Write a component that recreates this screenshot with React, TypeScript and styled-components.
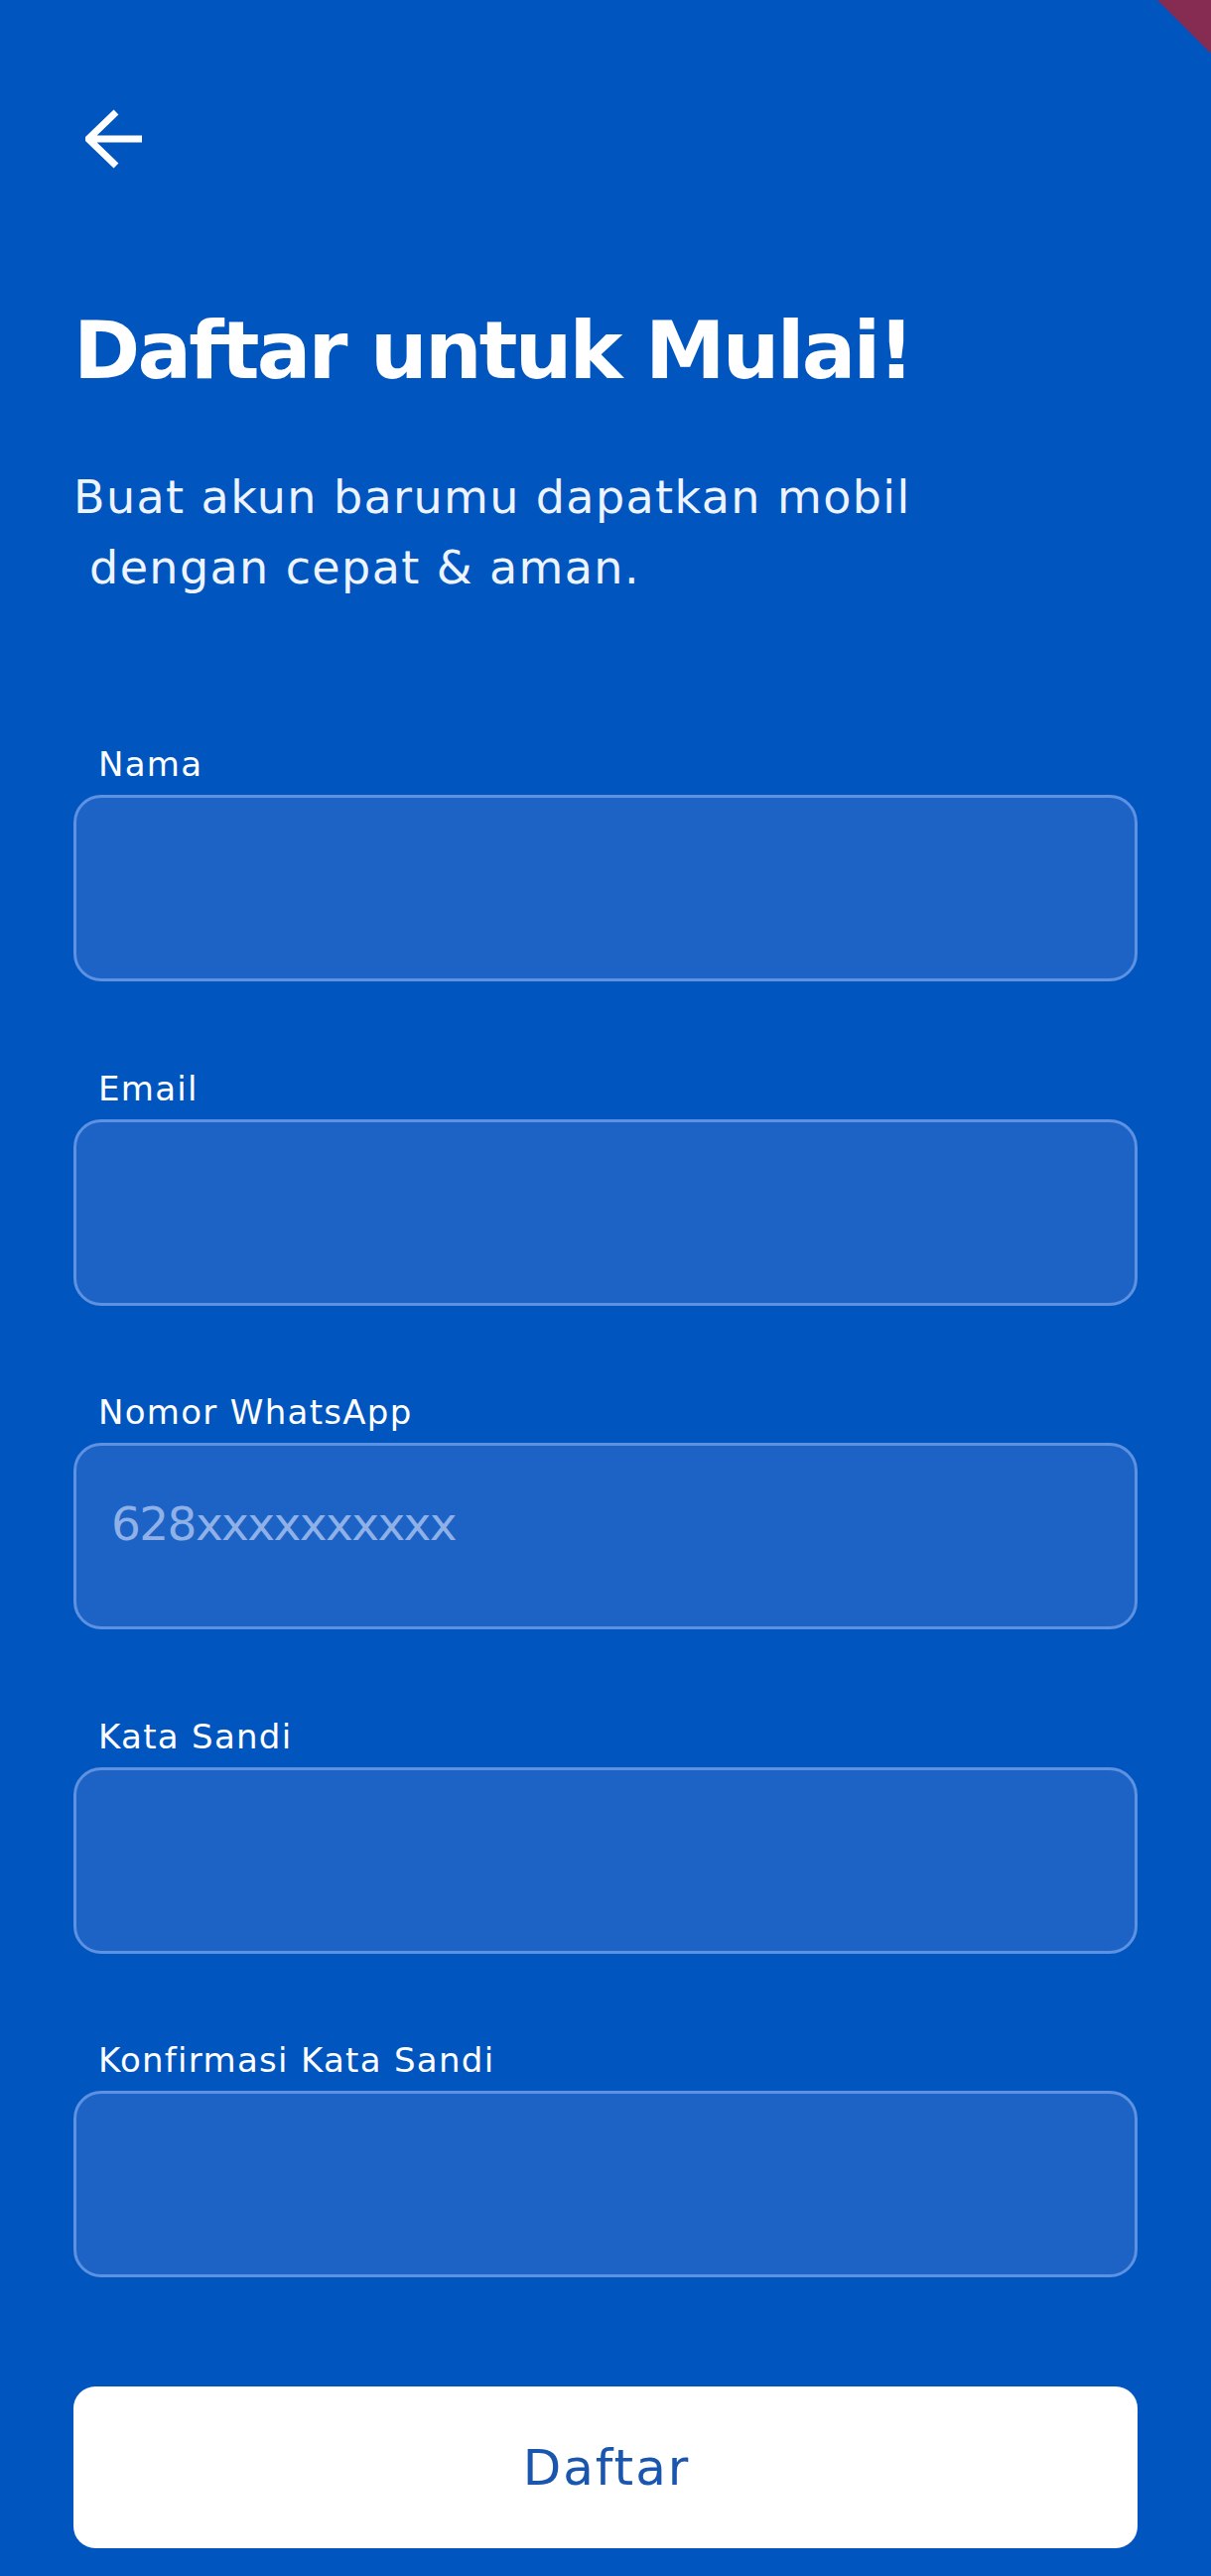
import React from "react";
import styled, { createGlobalStyle } from "styled-components";

const GlobalStyle = createGlobalStyle`
  html, body {
    margin: 0;
    padding: 0;
    background: #0055bf;
  }
  * { box-sizing: border-box; }
`;

const Page = styled.div`
  position: relative;
  overflow: hidden;
  min-height: 2596px;
  background: #0055bf;
  padding: 0 74px;
  display: flex;
  flex-direction: column;
  font-family: "DejaVu Sans", "Liberation Sans", sans-serif;
  color: #ffffff;
`;

const DebugCorner = styled.div`
  position: absolute;
  top: 0;
  right: 0;
  width: 54px;
  height: 54px;
  background: #862b52;
  clip-path: polygon(0 0, 100% 0, 100% 100%);
`;

const BackButton = styled.button`
  margin: 110px 0 0 12px;
  padding: 0;
  width: 60px;
  height: 60px;
  border: none;
  background: transparent;
  cursor: pointer;
  display: block;
  svg { display: block; }
`;

const Title = styled.h1`
  margin: 135px 0 0 0;
  font-size: 81px;
  line-height: 96px;
  font-weight: 700;
  letter-spacing: -2.8px;
  color: #ffffff;
`;

const Subtitle = styled.p`
  margin: 65px 0 0 0;
  font-size: 46px;
  line-height: 71px;
  font-weight: 400;
  letter-spacing: 1.4px;
  white-space: pre-wrap;
  color: #eef4ff;
`;

const Form = styled.form`
  margin-top: 142px;
  display: flex;
  flex-direction: column;
  gap: 87.5px;
`;

const Field = styled.label`
  display: flex;
  flex-direction: column;
  gap: 11px;
`;

const LabelText = styled.span`
  padding-left: 25px;
  font-size: 34px;
  line-height: 40px;
  letter-spacing: 1.3px;
  color: #ffffff;
`;

const Input = styled.input`
  width: 100%;
  height: 188px;
  border: 3px solid #5d91e2;
  border-radius: 28px;
  background: #1c63c5;
  padding: 0 35px 26px 35px;
  font-family: "DejaVu Sans", "Liberation Sans", sans-serif;
  font-size: 47px;
  letter-spacing: -1.6px;
  color: #ffffff;
  outline: none;
  &::placeholder {
    color: #8fb1e8;
  }
`;

const SubmitButton = styled.button`
  margin-top: 110px;
  width: 100%;
  height: 163px;
  border: none;
  border-radius: 22px;
  background: #ffffff;
  font-family: "DejaVu Sans", "Liberation Sans", sans-serif;
  font-size: 50px;
  letter-spacing: 2px;
  padding: 0 0 0 2px;
  color: #1a55ae;
  cursor: pointer;
`;

const BackArrow = () => (
  <svg width="60" height="60" viewBox="0 0 60 60" fill="none">
    <path
      d="M31 3 L3 30 L31 57 M3 30 H57"
      stroke="#ffffff"
      strokeWidth="7"
      strokeLinecap="butt"
      strokeLinejoin="miter"
    />
  </svg>
);

const fields: { label: string; type: string; placeholder?: string }[] = [
  { label: "Nama", type: "text" },
  { label: "Email", type: "email" },
  { label: "Nomor WhatsApp", type: "tel", placeholder: "628xxxxxxxxxx" },
  { label: "Kata Sandi", type: "password" },
  { label: "Konfirmasi Kata Sandi", type: "password" },
];

export default function App() {
  return (
    <>
      <GlobalStyle />
      <Page>
        <DebugCorner />
        <BackButton type="button" aria-label="Kembali">
          <BackArrow />
        </BackButton>
        <Title>Daftar untuk Mulai!</Title>
        <Subtitle>{"Buat akun barumu dapatkan mobil\n dengan cepat & aman."}</Subtitle>
        <Form onSubmit={(e) => e.preventDefault()}>
          {fields.map((f) => (
            <Field key={f.label}>
              <LabelText>{f.label}</LabelText>
              <Input type={f.type} placeholder={f.placeholder} />
            </Field>
          ))}
        </Form>
        <SubmitButton type="button">Daftar</SubmitButton>
      </Page>
    </>
  );
}
